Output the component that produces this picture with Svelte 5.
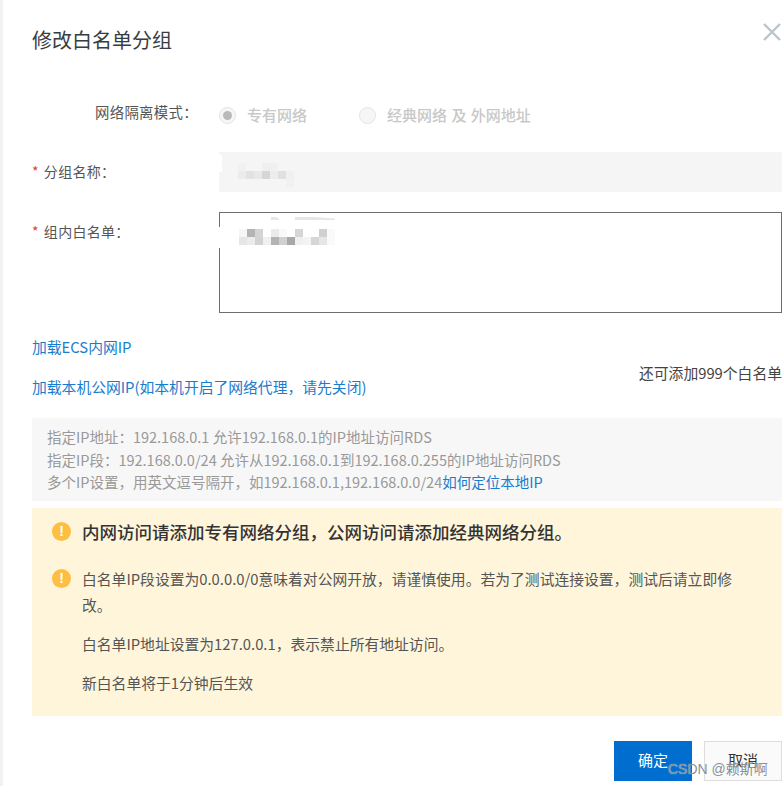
<script>
	// blurred values, rows of grey cells
	const namePatch = [
		['#f1f1f1', '#f5f5f5', '#f5f5f5', '#efefef', '#f0f0f0', '#f5f5f5', '#f5f5f5'],
		['#ececec', '#e2e2e2', '#e8e8e8', '#d6d6d6', '#ececec', '#e0e0e0', '#f0f0f0'],
		['#f5f5f5', '#f5f5f5', '#f5f5f5', '#f5f5f5', '#f5f5f5', '#f5f5f5', '#f1f1f1']
	];
	const listPatch = [
		['#f6f6f6', '#b4b4b4', '#d4d4d4', '#ffffff', '#ebebeb', '#f9f9f9', '#ffffff', '#d6d6d6', '#ffffff', '#ffffff', '#d0d0d0', '#fafafa'],
		['#e6e6e6', '#ececec', '#d2d2d2', '#f0f0f0', '#b4b4b4', '#d0d0d0', '#a8a8a8', '#f0f0f0', '#f3f3f3', '#d6d6d6', '#e6e6e6', '#fafafa']
	];
</script>

<div class="dialog">
	<button class="close" aria-label="关闭">
		<svg width="18" height="18" viewBox="0 0 18 18">
			<path d="M1 1 L17 17 M17 1 L1 17" stroke="#b9c5c9" stroke-width="2.4" fill="none" />
		</svg>
	</button>

	<h2>修改白名单分组</h2>

	<div class="row mode">
		<div class="label indent">网络隔离模式：</div>
		<div class="radios">
			<span class="radio checked"></span>
			<span class="radio-text first">专有网络</span>
			<span class="radio"></span>
			<span class="radio-text">经典网络 及 外网地址</span>
		</div>
	</div>

	<div class="row name">
		<div class="label"><i>*</i>分组名称：</div>
		<div class="name-input">
			<span class="gap short"></span>
			<div class="patch">
				{#each namePatch as cells}
					<div class="patch-row">
						{#each cells as c}
							<span style="background:{c}"></span>
						{/each}
					</div>
				{/each}
			</div>
		</div>
	</div>

	<div class="row list">
		<div class="label"><i>*</i>组内白名单：</div>
		<div class="list-input">
			<span class="gap"></span>
			<span class="streak"></span>
			<span class="streak small"></span>
			<div class="patch wide">
				{#each listPatch as cells}
					<div class="patch-row">
						{#each cells as c}
							<span style="background:{c}"></span>
						{/each}
					</div>
				{/each}
			</div>
		</div>
	</div>

	<div class="load">
		<div class="links">
			<a href="#ecs">加载ECS内网IP</a>
			<a href="#local">加载本机公网IP(如本机开启了网络代理，请先关闭)</a>
		</div>
		<div class="remain">还可添加999个白名单</div>
	</div>

	<div class="info">
		<p>指定IP地址：192.168.0.1 允许192.168.0.1的IP地址访问RDS</p>
		<p>指定IP段：192.168.0.0/24 允许从192.168.0.1到192.168.0.255的IP地址访问RDS</p>
		<p>多个IP设置，用英文逗号隔开，如192.168.0.1,192.168.0.0/24<a href="#locate">如何定位本地IP</a></p>
	</div>

	<div class="notice">
		<div class="notice-head">
			<span class="warn">!</span>
			<strong>内网访问请添加专有网络分组，公网访问请添加经典网络分组。</strong>
		</div>
		<div class="notice-body">
			<span class="warn low">!</span>
			<div class="notice-text">
				<p>白名单IP段设置为0.0.0.0/0意味着对公网开放，请谨慎使用。若为了测试连接设置，测试后请立即修改。</p>
				<p>白名单IP地址设置为127.0.0.1，表示禁止所有地址访问。</p>
				<p>新白名单将于1分钟后生效</p>
			</div>
		</div>
	</div>

	<div class="footer">
		<button class="ok">确定</button>
		<button class="cancel">取消</button>
	</div>

	<div class="watermark">CSDN @赖斯啊</div>
</div>

<style>
	:global(body) {
		background: #fff;
	}
	.dialog {
		position: relative;
		box-sizing: border-box;
		width: 784px;
		height: 786px;
		overflow: hidden;
		padding: 0 2px 0 29px;
		border-left: 3px solid #f2f2f2;
		font-family: 'Noto Sans CJK SC', 'Liberation Sans', sans-serif;
		font-size: 14.8px;
		color: #555;
	}
	.close {
		position: absolute;
		top: 23px;
		right: 3px;
		padding: 0;
		border: none;
		background: none;
		line-height: 0;
	}
	h2 {
		margin: 0;
		padding-top: 26px;
		height: 74px;
		box-sizing: border-box;
		font-size: 20px;
		line-height: 28px;
		font-weight: 400;
		color: #373d41;
	}
	.row {
		display: flex;
	}
	.label {
		width: 187px;
		flex: none;
		font-size: 14px;
		color: #555;
		letter-spacing: 0.3px;
	}
	.label i {
		font-style: normal;
		color: #e4393c;
		margin-right: 5px;
	}
	.indent {
		padding-left: 63px;
		box-sizing: border-box;
		white-space: nowrap;
		line-height: 20px;
		font-size: 14.4px;
		margin-top: -2px;
	}
	.mode {
		height: 78px;
		padding-top: 30px;
		box-sizing: border-box;
	}
	.radios {
		display: flex;
		align-items: center;
		height: 22px;
	}
	.radio {
		box-sizing: border-box;
		width: 17px;
		height: 17px;
		border-radius: 50%;
		border: 1px solid #e4e4e4;
		background: #f6f6f6;
		display: flex;
		align-items: center;
		justify-content: center;
	}
	.radio.checked::after {
		content: '';
		width: 9px;
		height: 9px;
		border-radius: 50%;
		background: #b9b9b9;
	}
	.radio-text {
		margin-left: 11px;
		margin-top: -1px;
		font-size: 15px;
		font-weight: 500;
		color: #c8c8c8;
		word-spacing: 1px;
	}
	.radio-text.first {
		margin-right: 52px;
	}
	.name {
		height: 60px;
		align-items: flex-start;
	}
	.name .label {
		line-height: 38px;
	}
	.name-input {
		flex: 1;
		height: 40px;
		background: #f5f5f5;
		position: relative;
	}
	.patch {
		position: absolute;
		left: 19px;
		top: 11px;
	}
	.patch-row {
		display: flex;
	}
	.patch-row span {
		width: 8px;
		height: 8px;
	}
	.wide {
		left: 19px;
		top: 16px;
	}
	.list {
		height: 122px;
	}
	.list .label {
		line-height: 38px;
	}
	.list-input {
		flex: 1;
		height: 101px;
		box-sizing: border-box;
		border: 1px solid #6e6e6e;
		position: relative;
	}
	.gap {
		position: absolute;
		left: -1px;
		top: 14px;
		width: 2px;
		height: 21px;
		background: #fff;
	}
	.gap.short {
		left: 0;
		top: 3px;
		width: 3px;
		height: 17px;
	}
	.streak {
		position: absolute;
		left: 75px;
		top: 4px;
		width: 40px;
		height: 3px;
		background: #e6e6e6;
		clip-path: polygon(0 0, 50% 0, 100% 50%, 100% 100%, 0 100%);
	}
	.streak.small {
		left: 51px;
		width: 8px;
	}
	.load {
		display: flex;
		justify-content: space-between;
		align-items: center;
		height: 66px;
	}
	.links {
		display: flex;
		flex-direction: column;
		gap: 20px;
	}
	a {
		color: #1a7ccc;
		text-decoration: none;
		line-height: 20px;
	}
	.remain {
		color: #444;
		padding-top: 10px;
		white-space: nowrap;
	}
	.info {
		height: 83px;
		box-sizing: border-box;
		margin-top: 18px;
		padding: 8px 15px 0;
		background: #f7f7f7;
		color: #999;
		font-size: 14.5px;
	}
	.info p {
		margin: 0;
		line-height: 22.5px;
	}
	.notice {
		height: 208px;
		box-sizing: border-box;
		margin-top: 7px;
		padding: 11px 38px 0 20px;
		background: #fff5db;
	}
	.notice-head {
		display: flex;
		align-items: center;
		gap: 11px;
		height: 24px;
		color: #333;
	}
	.notice-head strong {
		font-size: 17.5px;
		font-weight: 500;
		white-space: nowrap;
	}
	.notice-body {
		display: flex;
		gap: 11px;
		margin-top: 23px;
	}
	.warn {
		flex: none;
		width: 19px;
		height: 19px;
		border-radius: 50%;
		background: #fdbe41;
		color: #fff;
		font-size: 14px;
		font-weight: 700;
		line-height: 19px;
		text-align: center;
		font-family: 'Liberation Sans', sans-serif;
	}
	.warn.low {
		margin-top: 3px;
	}
	.notice-text {
		color: #555;
	}
	.notice-text p {
		margin: 0 0 13px;
		line-height: 26px;
	}
	.footer {
		display: flex;
		justify-content: flex-end;
		gap: 12px;
		margin-top: 25px;
	}
	.footer button {
		box-sizing: border-box;
		width: 78px;
		height: 40px;
		font-family: inherit;
		font-size: 15px;
		padding: 0 0 3px;
	}
	.ok {
		background: #006ecf;
		border: none;
		color: #fff;
	}
	.cancel {
		background: #fafafa;
		border: 1px solid #ddd;
		color: #333;
	}
	.watermark {
		position: absolute;
		left: 665px;
		top: 760px;
		font-size: 14px;
		line-height: 18px;
		color: #8a8f94;
		text-shadow: 0 0 1px rgba(255, 255, 255, 0.8);
		font-family: 'Liberation Sans', 'Noto Sans CJK SC', sans-serif;
		white-space: nowrap;
	}
</style>
